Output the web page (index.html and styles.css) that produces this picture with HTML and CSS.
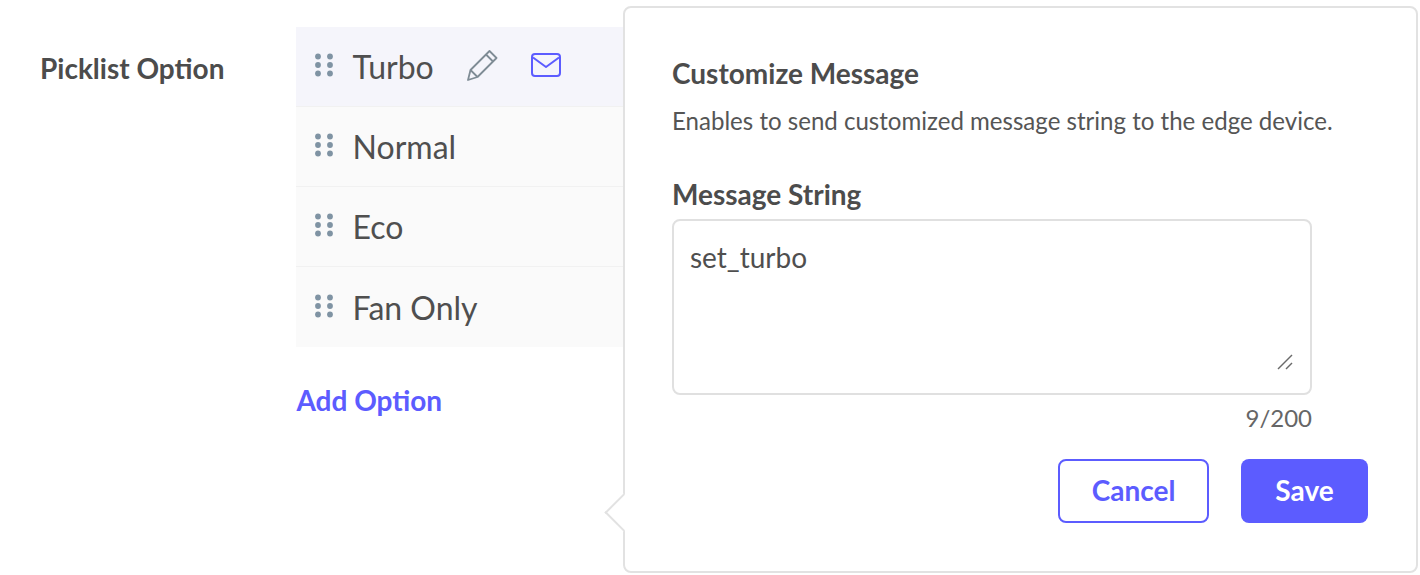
FILE: index.html
```html
<!DOCTYPE html>
<html lang="en">
<head>
<meta charset="utf-8">
<title>Customize Message</title>
<link rel="stylesheet" href="styles.css">
</head>
<body>
<main class="page">
  <div class="field-label">Picklist Option</div>
  <div class="options">
    <ul class="option-list">
      <li class="option option-active">
        <svg class="grip" viewBox="0 0 18 24"><g fill="#7f93a3"><circle cx="3" cy="3.5" r="2.9"/><circle cx="15" cy="3.5" r="2.9"/><circle cx="3" cy="12" r="2.9"/><circle cx="15" cy="12" r="2.9"/><circle cx="3" cy="20.5" r="2.9"/><circle cx="15" cy="20.5" r="2.9"/></g></svg>
        <span class="option-text">Turbo</span>
        <svg class="icon-edit" viewBox="0 0 32 32" fill="none" stroke="#7f8c95" stroke-width="1.8" stroke-linejoin="round"><path d="M2 31 L4.5 21 L23.5 2 L30.5 9 L11.5 28 Z"/><path d="M4.5 21 L11.5 28"/><path d="M20 5.5 L27 12.5"/></svg>
        <svg class="icon-mail" viewBox="0 0 30 24" fill="none" stroke="#5c5cff" stroke-width="2" stroke-linejoin="round"><rect x="1" y="1" width="28" height="22" rx="3"/><path d="M2 4.5 L15 14 L28 4.5"/></svg>
      </li>
      <li class="option">
        <svg class="grip" viewBox="0 0 18 24"><g fill="#7f93a3"><circle cx="3" cy="3.5" r="2.9"/><circle cx="15" cy="3.5" r="2.9"/><circle cx="3" cy="12" r="2.9"/><circle cx="15" cy="12" r="2.9"/><circle cx="3" cy="20.5" r="2.9"/><circle cx="15" cy="20.5" r="2.9"/></g></svg>
        <span class="option-text">Normal</span>
      </li>
      <li class="option">
        <svg class="grip" viewBox="0 0 18 24"><g fill="#7f93a3"><circle cx="3" cy="3.5" r="2.9"/><circle cx="15" cy="3.5" r="2.9"/><circle cx="3" cy="12" r="2.9"/><circle cx="15" cy="12" r="2.9"/><circle cx="3" cy="20.5" r="2.9"/><circle cx="15" cy="20.5" r="2.9"/></g></svg>
        <span class="option-text">Eco</span>
      </li>
      <li class="option option-last">
        <svg class="grip" viewBox="0 0 18 24"><g fill="#7f93a3"><circle cx="3" cy="3.5" r="2.9"/><circle cx="15" cy="3.5" r="2.9"/><circle cx="3" cy="12" r="2.9"/><circle cx="15" cy="12" r="2.9"/><circle cx="3" cy="20.5" r="2.9"/><circle cx="15" cy="20.5" r="2.9"/></g></svg>
        <span class="option-text">Fan Only</span>
      </li>
    </ul>
    <a class="add-option">Add Option</a>
  </div>
</main>
<section class="popover">
  <span class="popover-arrow"></span>
  <h2 class="popover-title">Customize Message</h2>
  <p class="popover-desc">Enables to send customized message string to the edge device.</p>
  <h3 class="input-label">Message String</h3>
  <div class="textarea">
    <span class="textarea-value">set_turbo</span>
    <svg class="resize-grip" viewBox="0 0 16 16" fill="none" stroke="#6a6a6a" stroke-width="1.4"><path d="M1 15 L15 1"/><path d="M9 15 L15 9"/></svg>
  </div>
  <div class="counter">9/200</div>
  <div class="actions">
    <button class="btn btn-outline">Cancel</button>
    <button class="btn btn-primary">Save</button>
  </div>
</section>
</body>
</html>
```
FILE: styles.css
```css
* { box-sizing: border-box; }
html, body { margin: 0; height: 100%; }
body {
  width: 1420px;
  height: 575px;
  overflow: hidden;
  position: relative;
  background: #fff;
  font-family: Lato, "Liberation Sans", sans-serif;
  color: #4a4a4a;
}
.page {
  display: flex;
  padding: 27px 0 0 40px;
}
.field-label {
  width: 256px;
  padding-top: 22px;
  font-size: 28px;
  line-height: 38px;
  font-weight: 700;
  color: #4c4c4c;
}
.options { width: 340px; }
.option-list { list-style: none; margin: 0; padding: 0; }
.option {
  height: 80px;
  display: flex;
  align-items: center;
  padding-left: 19px;
  background: #fafafa;
  border-bottom: 1px solid #f1f1f1;
}
.option-last { border-bottom: 0; padding-top: 2px; }
.option-active { background: #f5f5fb; }
.grip { width: 18px; height: 24px; margin-top: -4px; }
.option-text {
  margin-left: 19.6px;
  font-size: 32px;
  line-height: 40px;
  color: #4f4f4f;
}
.icon-edit { width: 32px; height: 32px; margin-left: 32.4px; margin-top: -3px; }
.icon-mail { width: 30px; height: 24px; margin-left: 33px; margin-top: -4px; }
.add-option {
  display: block;
  margin-top: 34px;
  margin-left: 0.4px;
  font-size: 28px;
  line-height: 38px;
  font-weight: 700;
  color: #5c5cff;
}
.popover {
  position: absolute;
  left: 623px;
  top: 6px;
  width: 795px;
  height: 567px;
  padding: 47px 47px 0;
  background: #fff;
  border: 2px solid #e2e2e2;
  border-radius: 8px;
}
.popover-arrow {
  position: absolute;
  left: -15px;
  top: 491px;
  width: 27px;
  height: 27px;
  background: #fff;
  border-left: 2px solid #e2e2e2;
  border-bottom: 2px solid #e2e2e2;
  transform: rotate(45deg);
}
.popover-title {
  margin: 0;
  font-size: 28px;
  line-height: 36px;
  font-weight: 700;
  color: #4c4c4c;
}
.popover-desc {
  margin: 12px 0 0;
  font-size: 24.07px;
  line-height: 36px;
  color: #555;
}
.input-label {
  margin: 37px 0 0;
  font-size: 28px;
  line-height: 36px;
  font-weight: 700;
  color: #4c4c4c;
}
.textarea {
  position: relative;
  width: 640px;
  height: 176px;
  margin-top: 7px;
  padding: 18px 16px;
  border: 2px solid #e0e0e0;
  border-radius: 8px;
  font-size: 28px;
  line-height: 36px;
  color: #4f4f4f;
}
.resize-grip {
  position: absolute;
  right: 17px;
  bottom: 23px;
  width: 16px;
  height: 16px;
}
.counter {
  width: 640px;
  margin-top: 7px;
  text-align: right;
  font-size: 24px;
  line-height: 32px;
  color: #666;
}
.actions {
  display: flex;
  justify-content: flex-end;
  gap: 32px;
  width: 696px;
  margin-top: 25px;
}
.btn {
  height: 64px;
  padding-bottom: 4px;
  border-radius: 8px;
  font: 700 28px/1 Lato, "Liberation Sans", sans-serif;
  cursor: pointer;
}
.btn-outline {
  width: 151px;
  background: #fff;
  border: 2px solid #5c5cff;
  color: #5c5cff;
}
.btn-primary {
  width: 127px;
  background: #5c5cff;
  border: 0;
  color: #fff;
}
```
